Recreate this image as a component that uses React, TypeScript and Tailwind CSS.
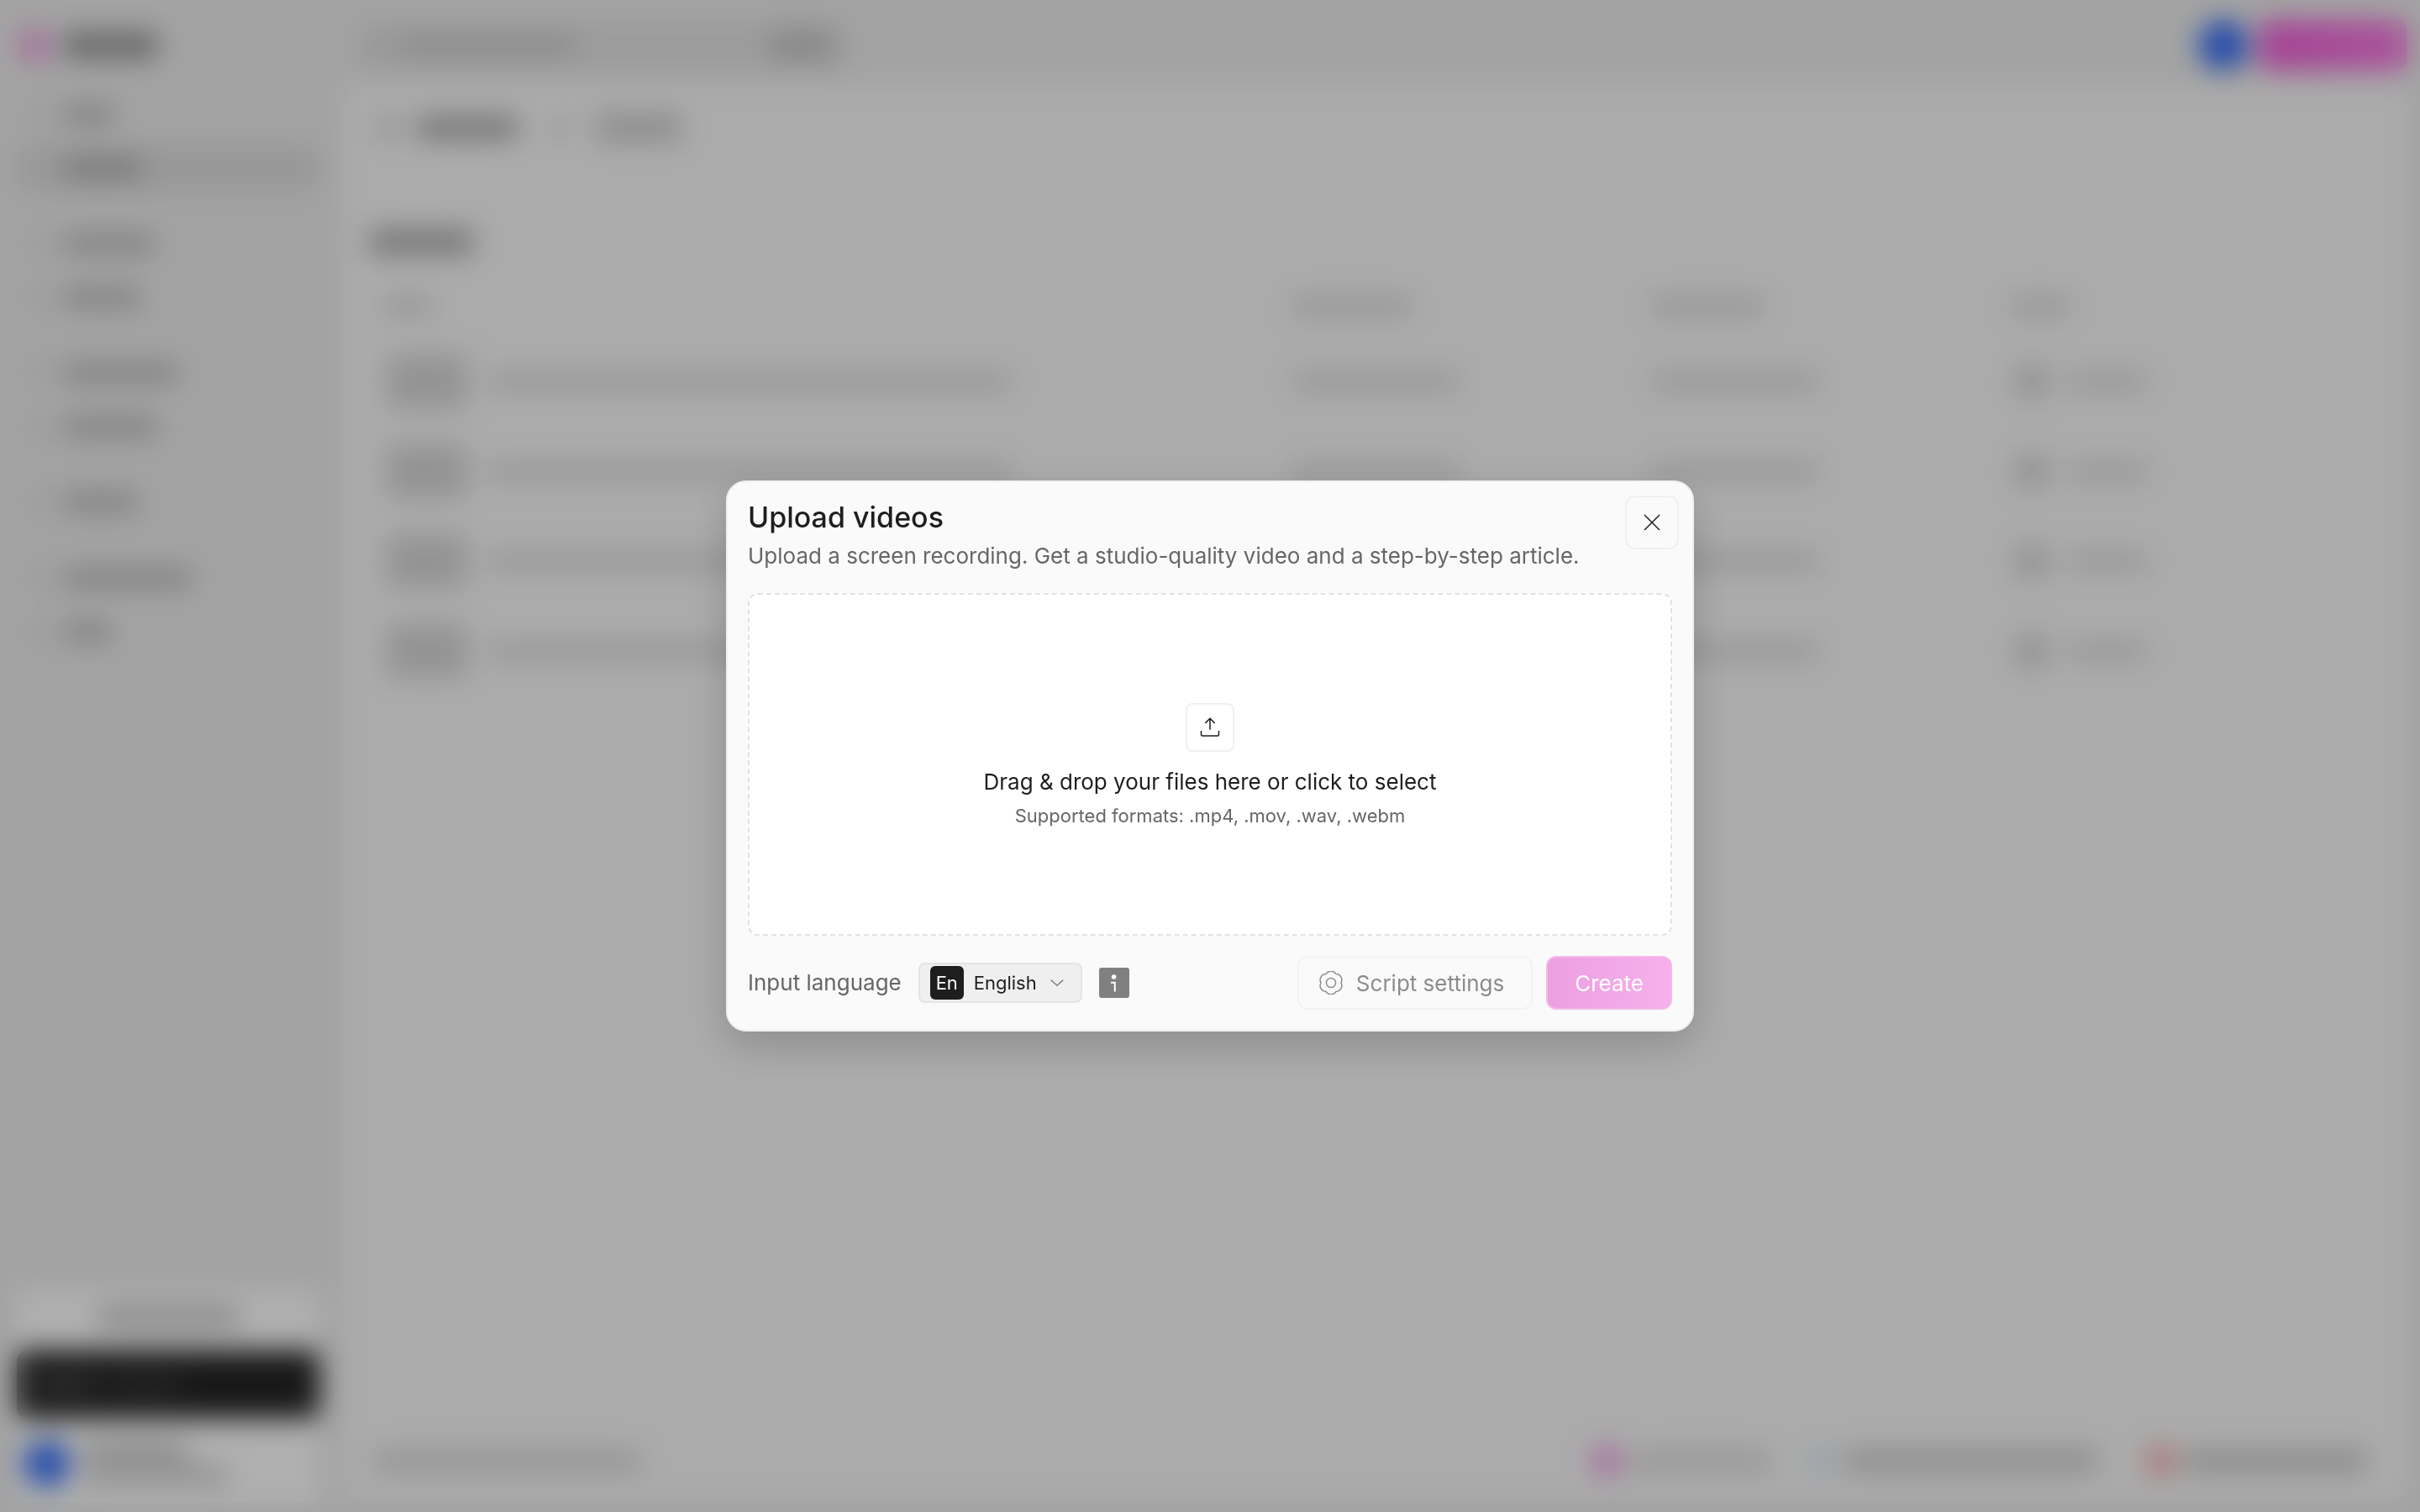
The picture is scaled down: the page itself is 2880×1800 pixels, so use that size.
/**
 * App.tsx
 * Projects workspace with the "Upload videos" dialog open on top of it.
 * The workspace behind the dialog is dimmed and blurred by the overlay, so it
 * is built from plain placeholder bars.
 */

import type { ReactNode } from "react";
import clsx from "clsx";

const NAV_GROUPS: { width: string; active?: boolean }[][] = [
  [{ width: "w-[60px]" }, { width: "w-[92px]", active: true }],
  [{ width: "w-[108px]" }, { width: "w-[92px]" }],
  [{ width: "w-[136px]" }, { width: "w-[112px]" }],
  [{ width: "w-[88px]" }],
  [{ width: "w-[152px]" }, { width: "w-[56px]" }],
];

const ROWS = [0, 1, 2, 3];

/** One placeholder for a run of text. */
function Bar({ className }: { className?: string }) {
  return <div className={clsx("shrink-0 rounded-md", className)} />;
}

function Sidebar() {
  return (
    <aside className="flex w-[408px] shrink-0 flex-col pr-7 pl-5">
      <div className="flex h-[108px] items-center gap-4 pl-1">
        <Bar className="size-9 bg-[#eca4e0]" />
        <Bar className="h-8 w-[112px] bg-[#989898]" />
      </div>

      <nav className="flex flex-col">
        {NAV_GROUPS.map((group, i) => (
          <div
            key={i}
            className={clsx(
              "flex flex-col gap-2",
              i > 0 && "mt-4 border-t-2 border-[#e3e3e3] pt-4",
            )}
          >
            {group.map((item, j) => (
              <div
                key={j}
                className={clsx(
                  "flex h-14 items-center gap-4 rounded-xl px-4",
                  item.active && "bg-[#dcdcdc]",
                )}
              >
                <Bar className="size-6 bg-[#dedede]" />
                <Bar
                  className={clsx(
                    "h-6",
                    item.width,
                    item.active ? "bg-[#b0b0b0]" : "bg-[#bcbcbc]",
                  )}
                />
              </div>
            ))}
          </div>
        ))}
      </nav>

      <div className="mt-auto flex flex-col gap-2 pb-3">
        <div className="flex h-16 items-center justify-center rounded-xl bg-white">
          <Bar className="h-6 w-[168px] bg-[#c6c6c6]" />
        </div>
        <div className="flex h-20 items-center gap-4 rounded-xl bg-[#242424] px-5">
          <Bar className="h-5 w-[72px] bg-[#4a4a4a]" />
          <Bar className="h-5 w-[88px] bg-[#3a3a3a]" />
        </div>
        <div className="flex h-[92px] items-center gap-4 rounded-xl bg-white px-2">
          <div className="size-14 rounded-full bg-[#3c72f6]" />
          <div className="flex flex-col gap-2">
            <Bar className="h-5 w-[124px] bg-[#c0c0c0]" />
            <Bar className="h-5 w-[172px] bg-[#cccccc]" />
          </div>
        </div>
      </div>
    </aside>
  );
}

function TopBar() {
  return (
    <header className="flex h-[100px] shrink-0 items-center justify-between px-4 pt-2">
      <div className="flex h-14 w-[584px] items-center rounded-xl bg-[#e2e2e2] px-4">
        <Bar className="size-6 bg-[#d8d8d8]" />
        <Bar className="ml-3 h-6 w-[208px] bg-[#c9c9c9]" />
        <Bar className="ml-auto h-9 w-[76px] bg-[#c6c6c6]" />
      </div>
      <div className="flex items-center gap-3">
        <div className="size-[60px] rounded-full bg-[#3a6ff4]" />
        <div className="h-[60px] w-[176px] rounded-xl bg-linear-to-r from-[#ee60d8] to-[#f678e0]" />
      </div>
    </header>
  );
}

function ProjectsTable() {
  return (
    <table className="mt-6 w-full table-fixed">
      <colgroup>
        <col />
        <col className="w-[18%]" />
        <col className="w-[18%]" />
        <col className="w-[18.5%]" />
      </colgroup>
      <thead>
        <tr className="h-[72px] border-b border-[#ebebeb]">
          {["w-[60px]", "w-[144px]", "w-[136px]", "w-[72px]"].map((width) => (
            <td key={width} className="px-4">
              <Bar className={clsx("h-5 bg-[#d6d6d6]", width)} />
            </td>
          ))}
        </tr>
      </thead>
      <tbody>
        {ROWS.map((row) => (
          <tr key={row} className="h-[107px] border-b border-[#f0f0f0] last:border-b-0">
            <td className="px-5">
              <div className="flex items-center gap-6">
                <Bar className="h-16 w-24 bg-[#d6d6d6]" />
                <Bar className="h-5 w-[624px] bg-[#d8d8d8]" />
              </div>
            </td>
            <td className="px-4">
              <Bar className="h-5 w-[200px] bg-[#d8d8d8]" />
            </td>
            <td className="px-4">
              <Bar className="h-5 w-[200px] bg-[#d8d8d8]" />
            </td>
            <td className="px-5">
              <div className="flex items-center gap-5">
                <div className="size-11 rounded-full bg-[#d6d6d6]" />
                <Bar className="h-5 w-[96px] bg-[#d8d8d8]" />
              </div>
            </td>
          </tr>
        ))}
      </tbody>
    </table>
  );
}

function Workspace() {
  return (
    <div className="flex h-full bg-[#ececec]" aria-hidden>
      <Sidebar />
      <div className="flex min-w-0 grow flex-col pb-4">
        <TopBar />
        <main className="mr-4 flex grow flex-col rounded-2xl bg-[#f8f8f8] pt-7 pr-12 pl-8">
          <div className="flex h-12 items-center pl-2">
            <Bar className="size-7 bg-[#d8d8d8]" />
            <Bar className="ml-5 h-7 w-[120px] bg-[#acacac]" />
            <Bar className="ml-10 size-5 bg-[#d0d0d0]" />
            <Bar className="ml-8 h-9 w-[104px] bg-[#d0d0d0]" />
          </div>
          <div className="flex pt-24">
            <Bar className="h-8 w-[124px] bg-[#b0b0b0]" />
          </div>
          <ProjectsTable />
          <footer className="mt-auto flex h-[92px] items-center border-t border-[#f0f0f0] pl-1">
            <Bar className="h-6 w-[320px] bg-[#d6d6d6]" />
            <div className="ml-auto flex items-center gap-3">
              <Bar className="size-8 bg-[#f09ae4]" />
              <Bar className="h-6 w-[168px] bg-[#dadada]" />
              <Bar className="ml-8 size-8 bg-[#dfe9f4]" />
              <Bar className="h-6 w-[300px] bg-[#c8c8c8]" />
              <Bar className="ml-12 size-8 bg-[#f7a6ac]" />
              <Bar className="h-6 w-[216px] bg-[#c5c5c5]" />
            </div>
          </footer>
        </main>
      </div>
    </div>
  );
}

function CloseIcon() {
  return (
    <svg viewBox="0 0 20 20" className="size-5" fill="none" stroke="currentColor" strokeWidth="1.5" aria-hidden>
      <path d="M1 1l18 18M19 1l-18 18" />
    </svg>
  );
}

function UploadIcon() {
  return (
    <svg viewBox="0 0 24 24" className="size-6" fill="none" stroke="currentColor" strokeWidth="1.5" aria-hidden>
      <path d="M12 14.8V1.4M6.4 6.9 12 1.3l5.6 5.6" />
      <path d="M1.5 16v4.4c0 .9.6 1.5 1.5 1.5h18c.9 0 1.5-.6 1.5-1.5V16" />
    </svg>
  );
}

function ChevronIcon() {
  return (
    <svg viewBox="0 0 16 8" className="h-2 w-4 text-[#808080]" fill="none" stroke="currentColor" strokeWidth="1.5" aria-hidden>
      <path d="M.8.6 8 7.2 15.2.6" />
    </svg>
  );
}

function InfoIcon() {
  return (
    <svg viewBox="0 0 36 36" className="size-9" aria-hidden>
      <rect width="36" height="36" rx="3" fill="#808080" />
      <circle cx="17.6" cy="11" r="2.8" fill="#fff" />
      <path d="M14 17.8h4.8v10.6" fill="none" stroke="#fff" strokeWidth="2" />
    </svg>
  );
}

/** Six-lobed gear outline. */
function GearIcon() {
  return (
    <svg viewBox="0 0 28 28" className="size-7" fill="none" stroke="currentColor" strokeWidth="1.5" strokeLinejoin="round" aria-hidden>
      <path d="M26 14A7 7 0 0 1 20 24.4 7 7 0 0 1 8 24.4 7 7 0 0 1 2 14 7 7 0 0 1 8 3.6 7 7 0 0 1 20 3.6 7 7 0 0 1 26 14Z" />
      <circle cx="14" cy="14" r="5.6" />
    </svg>
  );
}

function LanguageSelect() {
  return (
    <div className="flex h-12 items-center gap-3 rounded-lg border-2 border-[#e4e4e4] bg-[#efefef] pr-5 pl-3">
      <span className="flex size-10 items-center justify-center rounded-md bg-[#1e1e1e] text-[22px] text-white">
        En
      </span>
      <div className="flex items-center gap-4">
        <select
          id="input-language"
          defaultValue="English"
          className="appearance-none bg-transparent text-[22px] text-[#1e1e1e] outline-none"
        >
          <option>English</option>
        </select>
        <ChevronIcon />
      </div>
    </div>
  );
}

function Dialog({ children }: { children: ReactNode }) {
  return (
    <div className="absolute inset-0 flex items-center justify-center bg-black/31 backdrop-blur-[16px]">
      <section
        role="dialog"
        aria-modal
        aria-labelledby="upload-title"
        className="relative flex w-[1152px] flex-col gap-6 rounded-3xl border-2 border-[#f0f0f0] bg-[#fafafa] p-6 shadow-[0_16px_48px_rgba(0,0,0,0.18)]"
      >
        {children}
      </section>
    </div>
  );
}

export default function App() {
  return (
    <div className="relative h-screen overflow-hidden font-['Inter',sans-serif] text-[#1e1e1e]">
      <Workspace />
      <Dialog>
        <div className="flex flex-col gap-2">
          <h1 id="upload-title" className="text-[34px] leading-9 font-medium">
            Upload videos
          </h1>
          <p className="text-[26px] leading-10 text-[#666666]">
            Upload a screen recording. Get a studio-quality video and a step-by-step article.
          </p>
        </div>

        <button
          type="button"
          aria-label="Close"
          className="absolute top-4 right-4 flex size-16 items-center justify-center rounded-xl border-2 border-[#efefef]"
        >
          <CloseIcon />
        </button>

        <button
          type="button"
          className="flex h-[408px] flex-col items-center justify-center rounded-xl border-2 border-dashed border-[#e2e2e2] bg-white"
        >
          <span className="flex size-[58px] items-center justify-center rounded-lg border-2 border-[#f0f0f0]">
            <UploadIcon />
          </span>
          <span className="mt-4 text-[26px] leading-10">
            Drag &amp; drop your files here or click to select
          </span>
          <span className="mt-2 text-[22px] leading-6 text-[#666666]">
            Supported formats: .mp4, .mov, .wav, .webm
          </span>
        </button>

        <div className="flex items-center justify-between">
          <div className="flex items-center">
            <label htmlFor="input-language" className="mr-5 text-[26px] leading-10 text-[#666666]">
              Input language
            </label>
            <LanguageSelect />
            <button type="button" aria-label="About input language" className="ml-5">
              <InfoIcon />
            </button>
          </div>
          <div className="flex items-center gap-4">
            <button
              type="button"
              className="flex h-16 items-center gap-4 rounded-xl border-2 border-[#f3f3f3] pr-8 pl-6 text-[26px] text-[#8c8c8c]"
            >
              <GearIcon />
              Script settings
            </button>
            <button
              type="button"
              className="h-16 rounded-xl border-2 border-[#f3b9ea] bg-linear-to-r from-[#ec9fe0] to-[#f6b0ec] bg-origin-border px-8 text-[26px] text-white"
            >
              Create
            </button>
          </div>
        </div>
      </Dialog>
    </div>
  );
}
